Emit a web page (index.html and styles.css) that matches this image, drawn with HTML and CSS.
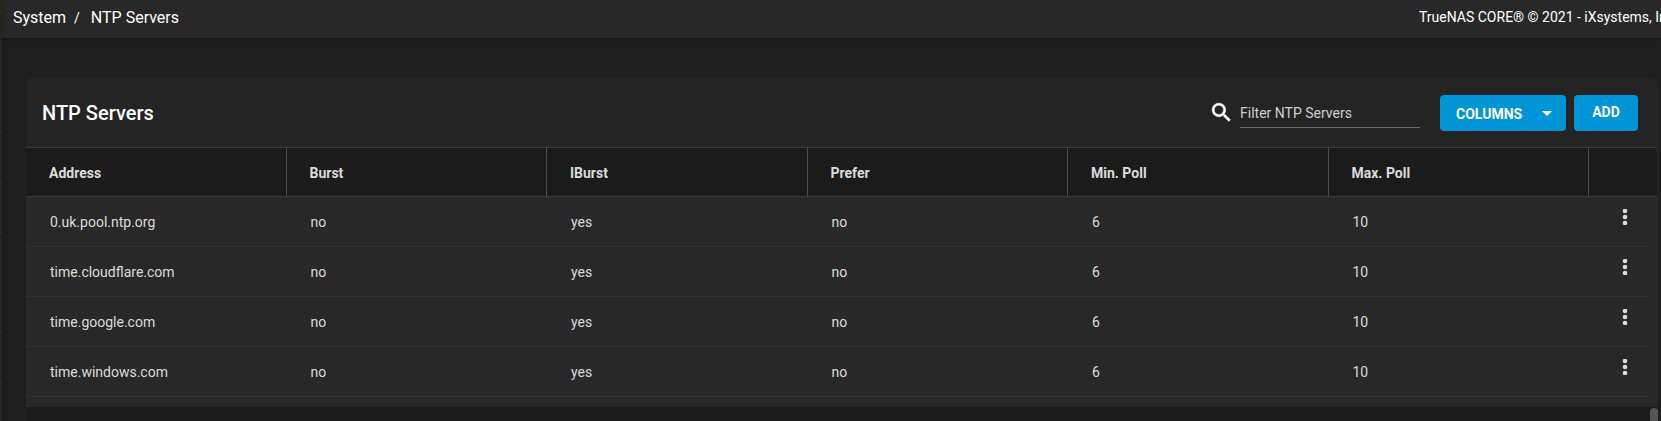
FILE: index.html
```html
<!DOCTYPE html>
<html lang="en">
<head>
<meta charset="utf-8">
<title>NTP Servers</title>
<link rel="stylesheet" href="styles.css">
</head>
<body>
<div class="app">
  <div class="sidenav-edge"></div>
  <div class="page">
    <header class="topbar">
      <nav class="breadcrumb" aria-label="Breadcrumb">
        <a href="#system">System</a><span class="separator">/</span><a href="#ntp">NTP Servers</a>
      </nav>
      <div class="copyright">TrueNAS CORE® © 2021 - iXsystems, Inc.</div>
    </header>
    <main class="content">
      <section class="card">
        <div class="toolbar">
          <h1 class="title">NTP Servers</h1>
          <label class="search-label" for="filter" aria-label="Filter">
            <svg class="search-icon" viewBox="0 0 24 24"><path d="M15.5 14h-.79l-.28-.27A6.47 6.47 0 0 0 16 9.5 6.5 6.5 0 1 0 9.5 16c1.61 0 3.09-.59 4.23-1.57l.27.28v.79l5 4.99L20.49 19l-4.99-5zm-6 0C7.01 14 5 11.99 5 9.5S7.01 5 9.5 5 14 7.01 14 9.5 11.99 14 9.5 14z"/></svg>
          </label>
          <input class="filter" id="filter" type="text" placeholder="Filter NTP Servers">
          <button class="btn columns" type="button">COLUMNS
            <svg class="caret" viewBox="0 0 10 5"><path d="M0 0h10L5 5z"/></svg>
          </button>
          <button class="btn add" type="button">ADD</button>
        </div>
        <table class="servers">
          <colgroup><col><col><col><col><col><col><col class="actions-col"></colgroup>
          <thead>
            <tr><th>Address</th><th>Burst</th><th>IBurst</th><th>Prefer</th><th>Min. Poll</th><th>Max. Poll</th><th></th></tr>
          </thead>
          <tbody>
            <tr><td>0.uk.pool.ntp.org</td><td>no</td><td>yes</td><td>no</td><td>6</td><td>10</td><td class="actions"><div class="actions-box"><button class="more" type="button" aria-label="Options"><svg class="dots" viewBox="0 0 6 16"><circle cx="3" cy="2" r="2.3"/><circle cx="3" cy="8" r="2.3"/><circle cx="3" cy="14" r="2.3"/></svg></button></div></td></tr>
            <tr><td>time.cloudflare.com</td><td>no</td><td>yes</td><td>no</td><td>6</td><td>10</td><td class="actions"><div class="actions-box"><button class="more" type="button" aria-label="Options"><svg class="dots" viewBox="0 0 6 16"><circle cx="3" cy="2" r="2.3"/><circle cx="3" cy="8" r="2.3"/><circle cx="3" cy="14" r="2.3"/></svg></button></div></td></tr>
            <tr><td>time.google.com</td><td>no</td><td>yes</td><td>no</td><td>6</td><td>10</td><td class="actions"><div class="actions-box"><button class="more" type="button" aria-label="Options"><svg class="dots" viewBox="0 0 6 16"><circle cx="3" cy="2" r="2.3"/><circle cx="3" cy="8" r="2.3"/><circle cx="3" cy="14" r="2.3"/></svg></button></div></td></tr>
            <tr><td>time.windows.com</td><td>no</td><td>yes</td><td>no</td><td>6</td><td>10</td><td class="actions"><div class="actions-box"><button class="more" type="button" aria-label="Options"><svg class="dots" viewBox="0 0 6 16"><circle cx="3" cy="2" r="2.3"/><circle cx="3" cy="8" r="2.3"/><circle cx="3" cy="14" r="2.3"/></svg></button></div></td></tr>
          </tbody>
        </table>
        <div class="table-end"></div>
        <div class="card-footer"><div class="scroll-thumb"></div></div>
      </section>
    </main>
  </div>
</div>
</body>
</html>
```
FILE: styles.css
```css
* {
  box-sizing: border-box;
}

body {
  margin: 0;
  overflow: hidden;
  background: #1e1e1e;
  color: #fff;
  font-family: Roboto, "Liberation Sans", sans-serif;
  font-size: 14px;
}

.app {
  display: flex;
  min-height: 100vh;
}

.sidenav-edge {
  flex: 0 0 2px;
  background: repeating-linear-gradient(#242424 0 49px, #333 49px 50px) 0 33px;
  box-shadow: 0 0 5px rgba(0, 0, 0, 0.4);
  z-index: 1;
}

.page {
  flex: 1;
  min-width: 0;
  display: flex;
  flex-direction: column;
}

.topbar {
  display: flex;
  align-items: center;
  justify-content: space-between;
  height: 38px;
  padding: 0 0 4px 11px;
  background: #282828;
  box-shadow: 0 1px 3px rgba(0, 0, 0, 0.4);
}

.breadcrumb {
  display: flex;
  align-items: center;
  font-size: 16px;
}

.breadcrumb a {
  color: #fff;
  text-decoration: none;
}

.separator {
  padding: 2px 11px 0 8px;
  font-size: 14px;
}

.copyright {
  flex: 0 0 242px;
  min-width: 0;
  white-space: nowrap;
}

.content {
  flex: 1;
  display: flex;
  padding: 40px 3px 0 24px;
}

.card {
  flex: 1;
  min-width: 0;
  display: flex;
  flex-direction: column;
  overflow: hidden;
  border-radius: 6px 6px 0 0;
  background: #282828;
}

.toolbar {
  display: flex;
  align-items: center;
  height: 69px;
  padding: 0 20px 0 16px;
  background: #242424;
}

.title {
  margin: 0 auto 0 0;
  font-size: 20px;
  font-weight: 500;
}

.search-label {
  display: flex;
  margin-right: 6px;
}

.search-icon {
  width: 25px;
  height: 25px;
  fill: #fff;
  stroke: #fff;
  stroke-width: 0.6;
}

.filter {
  width: 180px;
  height: 30px;
  margin-right: 20px;
  padding: 2px 0 0;
  border: 0;
  border-bottom: 1px solid #6c6c6c;
  background: none;
  color: #fff;
  font: inherit;
  outline: 0;
}

.filter::placeholder {
  color: #cfcfcf;
  opacity: 1;
}

.btn {
  display: flex;
  align-items: center;
  justify-content: center;
  height: 36px;
  border: 0;
  border-radius: 4px;
  background: #0095d5;
  color: #fff;
  font: inherit;
  font-weight: 700;
}

.columns {
  width: 126px;
  padding: 2px 14px 0 16px;
  justify-content: space-between;
}

.caret {
  width: 10px;
  height: 5px;
  fill: #fff;
}

.add {
  width: 64px;
  margin-left: 8px;
  padding: 0 0 2px;
}

.servers {
  width: 100%;
  table-layout: fixed;
  border-collapse: separate;
  border-spacing: 0;
  color: #dcdcdc;
}

.actions-col {
  width: 69px;
}

.servers th {
  height: 50px;
  padding: 2px 0 0 23px;
  border: 0 solid #4c4c4c;
  border-right-width: 1px;
  background: #1b1b1b;
  box-shadow: inset 0 1px #383838, inset 0 -1px #383838;
  font-weight: 700;
  text-align: left;
}

.servers th:last-child {
  border-right-color: #282828;
}

.servers td {
  height: 50px;
  padding: 0 0 0 24px;
  border-bottom: 1px solid #323232;
}

.servers .actions {
  padding: 0 9px 0 0;
  border: 0;
}

.actions-box {
  display: flex;
  justify-content: flex-end;
  align-items: flex-start;
  height: 50px;
  padding: 6px 11px 0 0;
  border-bottom: 1px solid #323232;
}

.more {
  display: flex;
  align-items: center;
  justify-content: center;
  width: 26px;
  height: 28px;
  padding: 0;
  border: 0;
  background: none;
}

.dots {
  width: 6px;
  height: 16px;
  fill: #dcdcdc;
}

.table-end {
  height: 10px;
}

.card-footer {
  flex: 1;
  display: flex;
  justify-content: flex-end;
  min-height: 12px;
  padding-top: 1px;
  background: #1b1b1b;
}

.scroll-thumb {
  width: 8px;
  border-radius: 4px 4px 0 0;
  background: #555;
}
```
